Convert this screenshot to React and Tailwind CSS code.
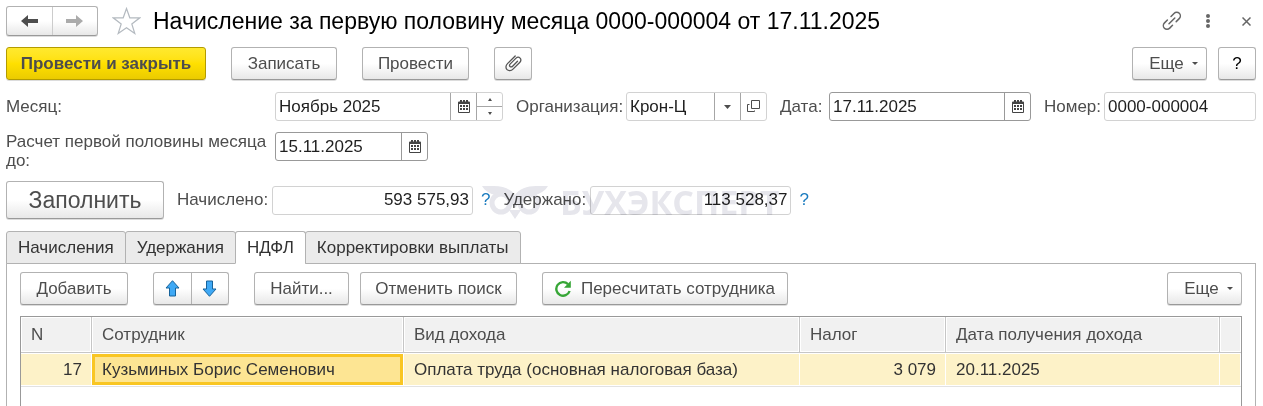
import { useState } from 'react';
import clsx from 'clsx';

const buttonBase =
    'flex shrink-0 items-center justify-center rounded-[3px] border border-[#b2b2b2] border-b-[#999999] bg-linear-to-b from-white from-50% to-[#e8e8e8] text-[#4d4d4d] shadow-[0_1px_0_#dcdcdc]';

const Button = ({ className, children, size = 'h-[33px]', ...props }) => (
    <button type="button" className={clsx(buttonBase, size, className)} {...props}>
        {children}
    </button>
);

const MoreButton = () => (
    <Button className="w-[75px] gap-2 pl-2">
        Еще
        <svg width="6" height="3" viewBox="0 0 6 3" fill="#4d4d4d" aria-hidden="true">
            <path d="M0 0h6L3 3z" />
        </svg>
    </Button>
);

const CalendarIcon = () => (
    <svg width="12" height="13" viewBox="0 0 12 13" aria-hidden="true">
        <path d="M0 2.5Q0 1.5 1 1.5h1V0h2v1.5h1V0h2v1.5h1V0h2v1.5h1q1 0 1 1V12q0 1-1 1H1q-1 0-1-1z" fill="#444" />
        <path d="M1 4h10v8H1z" fill="#fff" />
        <path d="M2 5h2v2H2zM5 5h2v2H5zM8 5h2v2H8zM2 8h2v2H2zM5 8h2v2H5zM8 8h2v2H8z" fill="#444" />
    </svg>
);

const OpenIcon = () => (
    <svg width="13" height="13" viewBox="0 0 13 13" fill="none" stroke="#4d4d4d" aria-hidden="true">
        <path d="M4.5.5h8v8h-8zM2.5 4.5h-2v7h7v-1" />
    </svg>
);

const PaperclipIcon = () => (
    <svg width="17" height="17" viewBox="0 0 17 17" fill="none" stroke="#555" strokeWidth="1.3" strokeLinecap="round" aria-hidden="true">
        <path d="M10.2 1 2.5 8.6c-2 2-1.9 4.6-.5 6s4.2 1.3 6-.5l6.7-6.6c1.5-1.5 1.5-3.3.4-4.4s-2.9-1.1-4.3.3L5.3 8.9c-.9.9-.9 2-.3 2.6s1.7.6 2.6-.3l4.9-4.9" />
    </svg>
);

const LinkIcon = () => (
    <svg width="20" height="20" viewBox="0 0 20 20" fill="none" stroke="#666" strokeWidth="1.5" strokeLinecap="round" aria-hidden="true">
        <path d="M9 5.5 12 2.4c1.5-1.5 3.9-1.5 5.3-.1s1.4 3.8-.1 5.3L14.2 10.6M5.4 9 2.5 11.9c-1.5 1.5-1.5 3.9-.1 5.3s3.8 1.4 5.3-.1L10.5 14.3M7 12.8l5.8-5.8" />
    </svg>
);

const FieldButton = ({ label, children, dark }) => (
    <button
        type="button"
        aria-label={label}
        className={clsx('flex w-[26px] shrink-0 items-center justify-center border-l', dark ? 'border-[#999999]' : 'border-[#a6a6a6]')}
    >
        {children}
    </button>
);

const Field = ({ id, value, className, align, dark, children }) => (
    <div className={clsx('flex h-[29px] rounded-[3px] border', dark ? 'border-[#999999]' : 'border-[#d2d2d2]', className)}>
        <input
            id={id}
            type="text"
            defaultValue={value}
            className={clsx('w-full min-w-0 flex-1 bg-transparent px-[3px] text-[#1f1f1f] outline-none', align === 'right' && 'text-right')}
        />
        {children}
    </div>
);

const Spinner = () => (
    <div className="flex w-[26px] shrink-0 flex-col border-l border-[#a6a6a6]">
        <button type="button" aria-label="Следующий месяц" className="flex flex-1 items-center justify-center border-b border-[#a6a6a6]">
            <svg width="4" height="3" viewBox="0 0 4 3" fill="#4d4d4d"><path d="M0 3h4L2 0z" /></svg>
        </button>
        <button type="button" aria-label="Предыдущий месяц" className="flex flex-1 items-center justify-center">
            <svg width="4" height="3" viewBox="0 0 4 3" fill="#4d4d4d"><path d="M0 0h4L2 3z" /></svg>
        </button>
    </div>
);

const Watermark = () => (
    <div className="pointer-events-none absolute top-1 left-[476px] flex items-center gap-3 text-[#e6e6ec] mix-blend-multiply">
        <svg width="66" height="34" viewBox="0 0 66 34" fill="none" aria-hidden="true">
            <path d="M0 1h12c9 0 17 3 21 9 4-6 12-9 21-9h12c-3 5-8 8-14 9-6 0-11 2-14 7l-5 6-5-6c-3-5-8-7-14-7C8 9 3 6 0 1z" fill="currentColor" />
            <path d="M27 25h12l-6 9z" fill="currentColor" />
            <circle cx="19" cy="18" r="9" stroke="currentColor" strokeWidth="5" />
            <circle cx="47" cy="18" r="9" stroke="currentColor" strokeWidth="5" />
        </svg>
        <span className="font-['Open_Sans',sans-serif] text-[34px] leading-none font-bold">БУХЭКСПЕРТ</span>
    </div>
);

const tabs = ['Начисления', 'Удержания', 'НДФЛ', 'Корректировки выплаты'];
const columns = ['N', 'Сотрудник', 'Вид дохода', 'Налог', 'Дата получения дохода', ''];
const rows = [
    { n: 17, employee: 'Кузьминых Борис Семенович', income: 'Оплата труда (основная налоговая база)', tax: '3 079', date: '20.11.2025' }
];

const App = () => {
    const [activeTab, setActiveTab] = useState('НДФЛ');

    return (
        <div className="flex min-h-screen flex-col bg-white pt-1.5 pr-[7px] pl-1.5 font-['Liberation_Sans',Arial,sans-serif] text-[17px] leading-6 text-[#4d4d4d]">
            {/* Title bar */}
            <header className="flex h-[30px] items-center">
                <div className={clsx(buttonBase, 'h-[30px] w-[92px]')}>
                    <button type="button" aria-label="Назад" className="flex h-full flex-1 items-center justify-center border-r border-[#cccccc]">
                        <svg width="17" height="12" viewBox="0 0 17 12" fill="#4d4d4d"><path d="M0 6 7 0v4h10v4H7v4z" /></svg>
                    </button>
                    <button type="button" aria-label="Вперед" className="flex h-full flex-1 items-center justify-center">
                        <svg width="17" height="12" viewBox="0 0 17 12" fill="#ababab"><path d="m17 6-7-6v4H0v4h10v4z" /></svg>
                    </button>
                </div>
                <button type="button" aria-label="В избранное" className="ml-3.5">
                    <svg width="29" height="28" viewBox="0 0 29 28" fill="none" stroke="#b4bac0" strokeWidth="1.2">
                        <path d="m14.5 1.5 3.3 9.3h10l-8 6.1 3 9.6-8.3-5.8-8.3 5.8 3-9.6-8-6.1h10z" />
                    </svg>
                </button>
                <h1 className="ml-3 flex-1 text-[23px] whitespace-nowrap text-black">Начисление за первую половину месяца 0000-000004 от 17.11.2025</h1>
                <div className="flex items-center pr-[5px]">
                    <button type="button" aria-label="Ссылка"><LinkIcon /></button>
                    <button type="button" aria-label="Меню" className="ml-6">
                        <svg width="4" height="14" viewBox="0 0 4 14" fill="#666"><circle cx="2" cy="2" r="2" /><circle cx="2" cy="7" r="2" /><circle cx="2" cy="12" r="2" /></svg>
                    </button>
                    <button type="button" aria-label="Закрыть" className="ml-8">
                        <svg width="9" height="9" viewBox="0 0 9 9" stroke="#666" strokeWidth="1.5"><path d="m.5.5 8 8m0-8-8 8" /></svg>
                    </button>
                </div>
            </header>

            {/* Commands */}
            <div className="mt-[11px] flex">
                <button
                    type="button"
                    className="h-[33px] w-[200px] rounded-[3px] border border-[#b39b00] bg-linear-to-b from-[#ffe92e] via-[#ffe000] to-[#ebcb00] font-bold text-[#4d4d4d] shadow-[0_1px_0_#dcdcdc]"
                >
                    Провести и закрыть
                </button>
                <Button className="ml-[25px] w-[106px]">Записать</Button>
                <Button className="ml-[25px] w-[107px]">Провести</Button>
                <Button className="ml-[25px] w-[38px]" aria-label="Вложения"><PaperclipIcon /></Button>
                <div className="ml-auto flex gap-[11px]">
                    <MoreButton />
                    <Button className="w-[38px]"><span className="text-black">?</span></Button>
                </div>
            </div>

            {/* Document fields */}
            <div className="mt-3 flex items-center">
                <label htmlFor="month" className="w-[269px]">Месяц:</label>
                <Field id="month" value="Ноябрь 2025" className="w-[228px]">
                    <FieldButton label="Выбрать месяц"><CalendarIcon /></FieldButton>
                    <Spinner />
                </Field>
                <label htmlFor="organization" className="ml-[13px] w-[110px]">Организация:</label>
                <Field id="organization" value="Крон-Ц" className="w-[141px]">
                    <FieldButton label="Выбрать организацию">
                        <svg width="7" height="4" viewBox="0 0 7 4" fill="#4d4d4d"><path d="M0 0h7L3.5 4z" /></svg>
                    </FieldButton>
                    <FieldButton label="Открыть организацию"><OpenIcon /></FieldButton>
                </Field>
                <label htmlFor="date" className="ml-[13px] w-[49px]">Дата:</label>
                <Field id="date" value="17.11.2025" className="w-[202px]" dark>
                    <FieldButton label="Выбрать дату" dark><CalendarIcon /></FieldButton>
                </Field>
                <label htmlFor="number" className="ml-[13px] w-[60px]">Номер:</label>
                <Field id="number" value="0000-000004" className="flex-1" />
            </div>
            <div className="mt-[11px] flex">
                <label htmlFor="until" className="w-[269px] pr-1 leading-[19px]">Расчет первой половины месяца до:</label>
                <Field id="until" value="15.11.2025" className="w-[153px]" dark>
                    <FieldButton label="Выбрать дату расчета" dark><CalendarIcon /></FieldButton>
                </Field>
            </div>

            {/* Totals */}
            <div className="relative mt-[11px] flex items-center">
                <Button size="h-[38px]" className="w-[158px] text-[23px]">Заполнить</Button>
                <label htmlFor="accrued" className="ml-[13px] w-[95px]">Начислено:</label>
                <Field id="accrued" value="593 575,93" className="w-[201px]" align="right" />
                <button type="button" className="ml-2 text-[#1a7bbf]">?</button>
                <label htmlFor="withheld" className="ml-[13px] w-[87px]">Удержано:</label>
                <Field id="withheld" value="113 528,37" className="w-[201px]" align="right" />
                <button type="button" className="ml-2 text-[#1a7bbf]">?</button>
                <Watermark />
            </div>

            {/* Tabs */}
            <div role="tablist" className="mt-3 flex border-b border-[#b2b2b2]">
                {tabs.map((tab) => (
                    <button
                        key={tab}
                        type="button"
                        role="tab"
                        aria-selected={tab === activeTab}
                        onClick={() => setActiveTab(tab)}
                        className={clsx(
                            '-mb-px h-[33px] rounded-t-[3px] border border-[#b2b2b2] px-[11px] text-[#333333] not-first:-ml-px',
                            tab === activeTab ? 'border-b-white bg-white' : 'bg-[#ebebeb]'
                        )}
                    >
                        {tab}
                    </button>
                ))}
            </div>

            <div role="tabpanel" className="flex flex-1 flex-col border-x border-[#b2b2b2] px-[13px] pt-2">
                <div className="flex">
                    <Button className="w-[108px]">Добавить</Button>
                    <div className={clsx(buttonBase, 'ml-[25px] h-[33px] w-[76px]')}>
                        <button type="button" aria-label="Вверх" className="flex h-full flex-1 items-center justify-center border-r border-[#b2b2b2]">
                            <svg width="15" height="17" viewBox="0 0 15 17" fill="#3fa9f5" stroke="#17639b"><path d="M7.5.7 14 8h-3.5v8h-6V8H1z" /></svg>
                        </button>
                        <button type="button" aria-label="Вниз" className="flex h-full flex-1 items-center justify-center">
                            <svg width="15" height="17" viewBox="0 0 15 17" fill="#3fa9f5" stroke="#17639b"><path d="M7.5 16.3 14 9h-3.5V1h-6v8H1z" /></svg>
                        </button>
                    </div>
                    <Button className="ml-[25px] w-[95px]">Найти...</Button>
                    <Button className="ml-[11px] w-[157px]">Отменить поиск</Button>
                    <Button className="ml-[25px] w-[246px] gap-2.5">
                        <svg width="16" height="17" viewBox="0 0 16 17" fill="none" aria-hidden="true">
                            <path d="M13 4.2A6.8 6.8 0 1 0 14.6 11" stroke="#37a637" strokeWidth="2.4" />
                            <path d="M15.8.8v7H9z" fill="#37a637" />
                        </svg>
                        Пересчитать сотрудника
                    </Button>
                    <div className="ml-auto"><MoreButton /></div>
                </div>

                <div className="mt-[11px] flex-1 border border-b-0 border-[#999999]">
                    <table className="w-full table-fixed border-separate border-spacing-0 text-left">
                        <colgroup>
                            <col className="w-[71px]" />
                            <col className="w-[312px]" />
                            <col />
                            <col className="w-[146px]" />
                            <col className="w-[274px]" />
                            <col className="w-[21px]" />
                        </colgroup>
                        <thead>
                            <tr className="h-9">
                                {columns.map((column) => (
                                    <th
                                        key={column}
                                        className="border-r border-b border-[#c6c6c6] bg-[#f1f1f1] px-2.5 font-normal shadow-[inset_0_0_0_1px_#ffffff] last:border-r-0"
                                    >
                                        {column}
                                    </th>
                                ))}
                            </tr>
                        </thead>
                        <tbody>
                            {rows.map((row) => (
                                <tr key={row.n} className="h-[34px] text-[#333333] *:border-b *:border-[#e2e2e2] *:bg-[#fdf2c8] *:px-2.5 *:shadow-[inset_-1px_0_0_#ffffff,inset_0_1px_0_#ffffff,inset_0_-1px_0_#ffffff]">
                                    <td className="text-right">{row.n}</td>
                                    <td className="p-0!">
                                        <div className="mr-px flex h-[31px] items-center border-3 border-[#f9c623] bg-[#fde593] px-[7px]">{row.employee}</div>
                                    </td>
                                    <td>{row.income}</td>
                                    <td className="text-right">{row.tax}</td>
                                    <td>{row.date}</td>
                                    <td></td>
                                </tr>
                            ))}
                        </tbody>
                    </table>
                </div>
            </div>
        </div>
    );
};

export default App;
